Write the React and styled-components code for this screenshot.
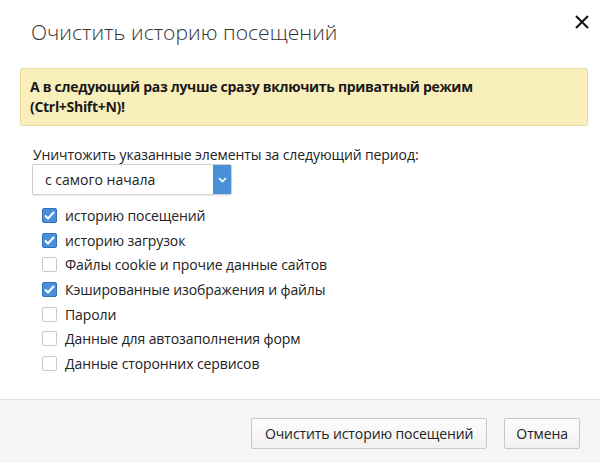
import React from "react";
import styled, { createGlobalStyle } from "styled-components";

const Global = createGlobalStyle`
  html, body { margin: 0; padding: 0; background: #fff; }
  body { font-family: "Open Sans", "Noto Sans", sans-serif; color: #222; }
  * { box-sizing: border-box; }
`;

const Dialog = styled.div`
  width: 600px;
  height: 463px;
  display: flex;
  flex-direction: column;
  background: #fff;
  position: relative;
`;

const Body = styled.div`
  flex: 1;
  padding: 17px 12px 0 20px;
  display: flex;
  flex-direction: column;
`;

const Title = styled.h1`
  margin: 0 0 0 11px;
  font-weight: 300;
  font-size: 21px;
  line-height: 30px;
  color: #333;
  letter-spacing: 0.05px;
`;

const Close = styled.button`
  position: absolute;
  top: 13px;
  right: 9px;
  width: 18px;
  height: 18px;
  border: 0;
  padding: 0;
  background: none;
  display: flex;
  align-items: center;
  justify-content: center;
`;

const Notice = styled.div`
  margin-top: 21px;
  background: #f9efbb;
  border: 1px solid #e8dc9f;
  border-radius: 2px;
  padding: 8px 9px;
  font-weight: 700;
  font-size: 14px;
  line-height: 20px;
  color: #1a1a1a;
  letter-spacing: -0.3px;
`;

const Label = styled.div`
  margin: 20px 0 0 13px;
  font-size: 14px;
  line-height: 18px;
  color: #222;
  letter-spacing: -0.1px;
`;

const Select = styled.div`
  margin: 0 0 0 12px;
  width: 200px;
  height: 31px;
  border: 1px solid #cfcfcf;
  border-radius: 2px;
  display: flex;
  box-shadow: 0 1px 1px rgba(0,0,0,0.06);
`;

const SelectValue = styled.div`
  flex: 1;
  padding-left: 12px;
  display: flex;
  align-items: center;
  font-size: 14px;
  color: #222;
`;

const SelectArrow = styled.div`
  width: 18px;
  background: #4a90d9;
  display: flex;
  align-items: center;
  justify-content: center;
  border-radius: 0 1px 1px 0;
`;

const List = styled.div`
  margin: 8px 0 0 22px;
  display: flex;
  flex-direction: column;
`;

const Row = styled.label`
  height: 24.7px;
  display: flex;
  align-items: center;
  gap: 8px;
  font-size: 14px;
  color: #222;
  letter-spacing: -0.1px;
`;

const Box = styled.span`
  width: 15px;
  height: 15px;
  border-radius: 2px;
  border: 1px solid ${p => (p.$checked ? "#2f6fb8" : "#c9c9c9")};
  background: ${p => (p.$checked ? "#4a8fd8" : "#fff")};
  display: flex;
  align-items: center;
  justify-content: center;
  flex-shrink: 0;
`;

const Footer = styled.div`
  height: 64px;
  border-top: 1px solid #e2e2e2;
  background: #f6f6f6;
  display: flex;
  justify-content: flex-end;
  align-items: flex-start;
  padding: 18px 20px 0 0;
  gap: 17px;
`;

const Button = styled.button`
  height: 31px;
  padding: 0 ${p => p.$pad || 14}px;
  border: 1px solid #c8c8c8;
  border-radius: 2px;
  background: linear-gradient(#fdfdfd, #f1f1f1);
  font-family: "Open Sans", "Noto Sans", sans-serif;
  font-size: 14px;
  color: #222;
  letter-spacing: -0.1px;
`;

const items = [
  ["историю посещений", true],
  ["историю загрузок", true],
  ["Файлы cookie и прочие данные сайтов", false],
  ["Кэшированные изображения и файлы", true],
  ["Пароли", false],
  ["Данные для автозаполнения форм", false],
  ["Данные сторонних сервисов", false],
];

export default function App() {
  return (
    <Dialog>
      <Global />
      <Close aria-label="close">
        <svg width="14" height="14" viewBox="0 0 14 14">
          <path d="M1 1 L13 13 M13 1 L1 13" stroke="#111" strokeWidth="2" />
        </svg>
      </Close>
      <Body>
        <Title>Очистить историю посещений</Title>
        <Notice>
          А в следующий раз лучше сразу включить приватный режим
          <br />
          (Ctrl+Shift+N)!
        </Notice>
        <Label>Уничтожить указанные элементы за следующий период:</Label>
        <Select>
          <SelectValue>с самого начала</SelectValue>
          <SelectArrow>
            <svg width="9" height="6" viewBox="0 0 9 6">
              <path d="M1 1 L4.5 4.5 L8 1" stroke="#fff" strokeWidth="1.6" fill="none" />
            </svg>
          </SelectArrow>
        </Select>
        <List>
          {items.map(([t, c]) => (
            <Row key={t}>
              <Box $checked={c}>
                {c && (
                  <svg width="11" height="9" viewBox="0 0 11 9">
                    <path d="M1 4.5 L4 7.5 L10 1" stroke="#fff" strokeWidth="2" fill="none" />
                  </svg>
                )}
              </Box>
              {t}
            </Row>
          ))}
        </List>
      </Body>
      <Footer>
        <Button $pad={13}>Очистить историю посещений</Button>
        <Button $pad={11}>Отмена</Button>
      </Footer>
    </Dialog>
  );
}
